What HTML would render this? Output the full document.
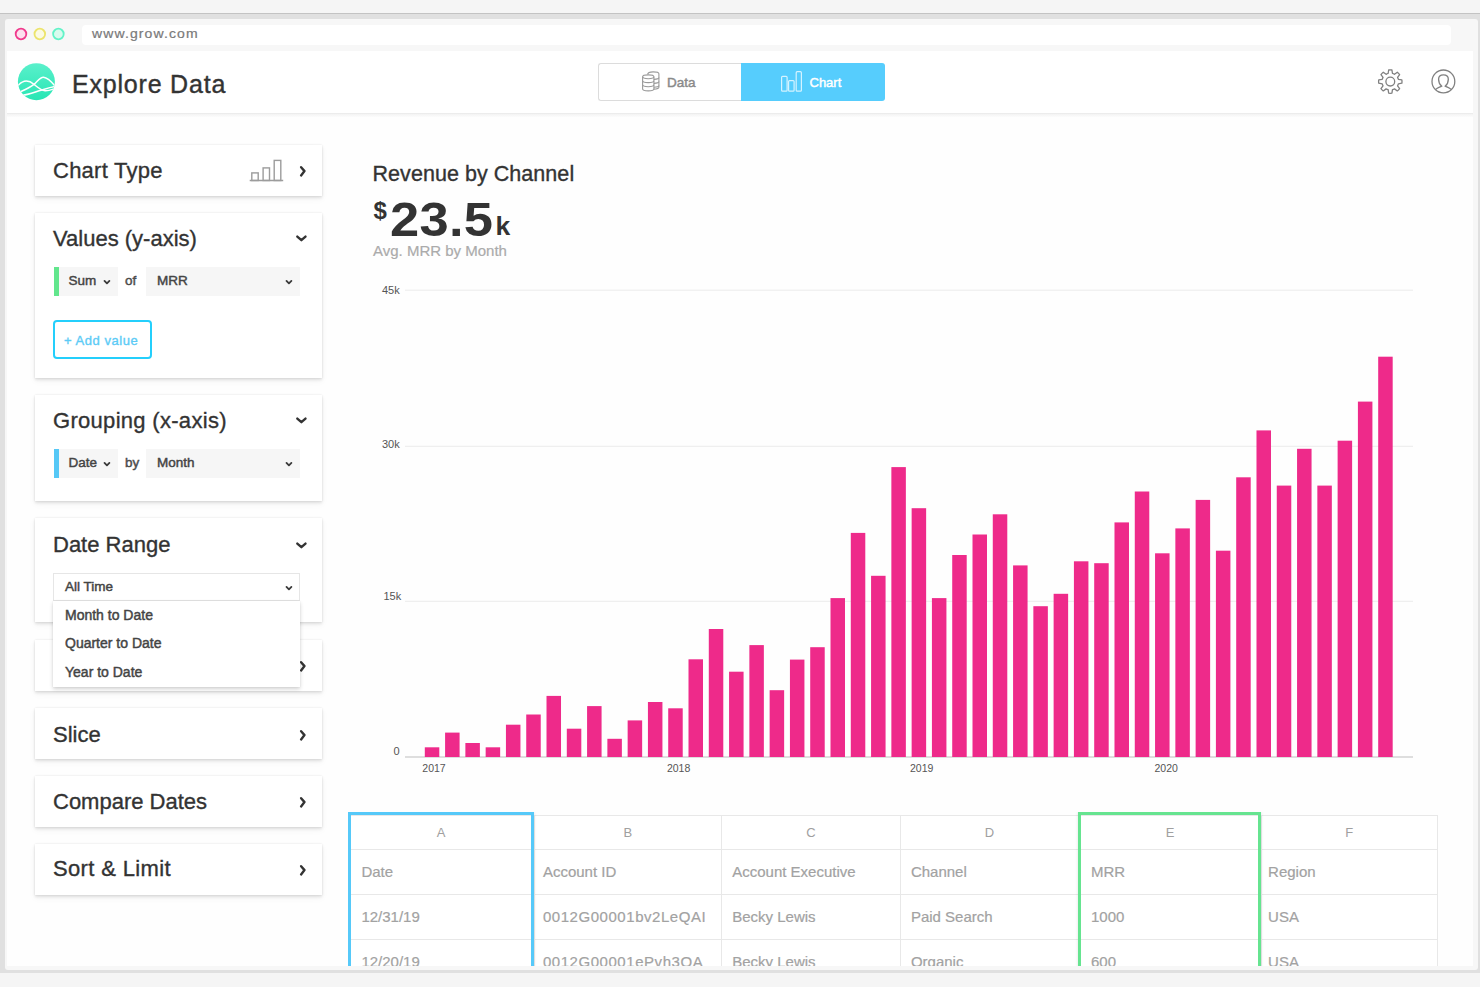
<!DOCTYPE html>
<html><head><meta charset="utf-8">
<style>
*{box-sizing:border-box;margin:0;padding:0}
html,body{width:1480px;height:987px;overflow:hidden;background:#f5f5f5;font-family:"Liberation Sans",sans-serif;position:relative}
.a{position:absolute}
.t{position:absolute;line-height:1;white-space:nowrap}
.frame{left:0;top:13px;width:1480px;height:960px;background:#e0e0e0;border-top:1.8px solid #c3c3c3}
.win{left:5px;top:19px;width:1473px;height:951px;background:#f7f7f7;border-radius:3px}
.content{left:7px;top:51px;width:1466px;height:915px;background:#fefefe;overflow:hidden}
.card{position:absolute;left:35px;width:287px;background:#fff;box-shadow:0 2px 3px rgba(0,0,0,0.10),0 0 2px rgba(0,0,0,0.09),0 3px 8px rgba(0,0,0,0.04)}
.ct{color:#333;font-size:22px;-webkit-text-stroke:0.35px #333}
.sel{position:absolute;background:#f6f6f6;height:28px}
.st{color:#444;font-size:13.5px;font-weight:400;-webkit-text-stroke:0.45px #444}
.tl{color:#a2a2a2;font-size:15px;-webkit-text-stroke:0.2px #a2a2a2}
.cl{color:#a0a0a0;font-size:13px}
.al{color:#555;font-size:11px}
</style></head><body>
<div class="a frame"></div>
<div class="a win"></div>
<!-- traffic lights -->
<svg class="a" style="left:0;top:19px" width="80" height="30">
<circle cx="21" cy="15" r="5.3" fill="#fde0ee" stroke="#f03a8c" stroke-width="1.8"/>
<circle cx="39.8" cy="15" r="5.3" fill="#fbfae4" stroke="#ece46c" stroke-width="1.8"/>
<circle cx="58.4" cy="15" r="5.3" fill="#d8fbee" stroke="#62f3c8" stroke-width="1.8"/>
</svg>
<div class="a" style="left:82px;top:25px;width:1369px;height:20px;background:#fff;border-radius:4px"></div>
<div class="t" style="left:91.5px;top:28px;font-size:12.5px;color:#7a7a7a;letter-spacing:1px;-webkit-text-stroke:0.2px #7a7a7a;transform:scaleX(1.12);transform-origin:0 0">www.grow.com</div>

<div class="a content"></div>
<div class="a" style="left:7px;top:51px;width:1466px;height:62px;background:#fff"></div>
<div class="a" style="left:7px;top:113px;width:1466px;height:1px;background:#ececec"></div>
<div class="a" style="left:7px;top:114px;width:1466px;height:3px;background:linear-gradient(#f3f3f3,#fcfcfc)"></div>
<div class="a" style="left:597.5px;top:63px;width:143.5px;height:38px;border:1.5px solid #dcdcdc;border-right:none;border-radius:3px 0 0 3px;background:#fff"></div>
<div class="a" style="left:740.5px;top:63px;width:144.5px;height:38px;background:#56cdfd;border-radius:0 3px 3px 0"></div>
<svg class="a" style="left:0;top:0" width="1480" height="120">
<defs><linearGradient id="lg" x1="0" y1="0" x2="0" y2="1"><stop offset="0" stop-color="#5af0cb"/><stop offset="1" stop-color="#28e6b4"/></linearGradient>
<clipPath id="lc"><circle cx="36.4" cy="81.7" r="18.5"/></clipPath></defs>
<circle cx="36.4" cy="81.7" r="18.5" fill="url(#lg)"/>
<g clip-path="url(#lc)"><g fill="none" stroke="#fff" stroke-width="1.5" transform="translate(14,60)">
<path d="M2,28 C7,21 13,18.5 20,24.3 C24,27.5 27,30.5 31,30.8 C35,31 38,29.5 41,28.5"/>
<path d="M4,33 C10,30 15,28 20,24.3 C24,21 26,17 29.5,17.2 C33,17.4 37,21 41,26"/>
<path d="M7,35.5 C14,35 21,32 27,30.2 C31,29 35,27.5 41,26.5"/>
</g></g>
<g fill="none" stroke="#9a9a9a" stroke-width="1.1">
<path d="M647.6,74.4 C647.8,72.7 650.3,71.9 653.1,71.9 C656.3,71.9 658.9,72.8 658.9,73.8 L658.9,87.2 C658.9,88.1 656.6,88.9 653.9,89.1"/>
<path d="M653.9,79.4 C656.6,79.3 658.9,78.5 658.9,77.6"/>
<path d="M653.9,83.4 C656.6,83.3 658.9,82.5 658.9,81.6"/>
<path d="M653.9,87.2 C656.6,87.1 658.9,86.3 658.9,85.4"/>
<ellipse cx="648.25" cy="76.8" rx="5.65" ry="1.9"/>
<path d="M642.6,76.8 L642.6,89 C642.6,90.1 645.1,90.9 648.25,90.9 C651.4,90.9 653.9,90.1 653.9,89 L653.9,76.8"/>
<path d="M642.6,80.7 C642.6,81.8 645.1,82.6 648.25,82.6 C651.4,82.6 653.9,81.8 653.9,80.7"/>
<path d="M642.6,84.8 C642.6,85.9 645.1,86.7 648.25,86.7 C651.4,86.7 653.9,85.9 653.9,84.8"/>
</g>
<g fill="none" stroke="#808080" stroke-width="1.3">
<path d="M1388.13,73.49 L1388.67,70.01 A11.70,11.70 0 0 1 1391.93,70.01 L1392.47,73.49 A8.40,8.40 0 0 1 1394.50,74.33 L1397.34,72.26 A11.70,11.70 0 0 1 1399.64,74.56 L1397.57,77.40 A8.40,8.40 0 0 1 1398.41,79.43 L1401.89,79.97 A11.70,11.70 0 0 1 1401.89,83.23 L1398.41,83.77 A8.40,8.40 0 0 1 1397.57,85.80 L1399.64,88.64 A11.70,11.70 0 0 1 1397.34,90.94 L1394.50,88.87 A8.40,8.40 0 0 1 1392.47,89.71 L1391.93,93.19 A11.70,11.70 0 0 1 1388.67,93.19 L1388.13,89.71 A8.40,8.40 0 0 1 1386.10,88.87 L1383.26,90.94 A11.70,11.70 0 0 1 1380.96,88.64 L1383.03,85.80 A8.40,8.40 0 0 1 1382.19,83.77 L1378.71,83.23 A11.70,11.70 0 0 1 1378.71,79.97 L1382.19,79.43 A8.40,8.40 0 0 1 1383.03,77.40 L1380.96,74.56 A11.70,11.70 0 0 1 1383.26,72.26 L1386.10,74.33 A8.40,8.40 0 0 1 1388.13,73.49 Z" stroke-linejoin="round"/>
<circle cx="1390.3" cy="81.6" r="4.4"/>
<circle cx="1443.4" cy="81.4" r="11.4"/>
<path d="M1435.8,89.4 C1437.5,87.6 1440,87.2 1441.6,86.1 C1439.3,84.2 1438.6,81.5 1438.6,79.2 C1438.6,76.4 1440.7,74.8 1443.4,74.8 C1446.1,74.8 1448.3,76.4 1448.3,79.2 C1448.3,81.5 1447.6,84.2 1445.3,86.1 C1446.9,87.2 1449.4,87.6 1451,89.4"/>
</g>
</svg>
<div class="t" style="left:72px;top:72.3px;font-size:25px;color:#333;letter-spacing:0.8px;-webkit-text-stroke:0.4px #333">Explore Data</div>
<div class="t" style="left:667px;top:75.8px;font-size:13.5px;color:#8a8a8a;-webkit-text-stroke:0.45px #8a8a8a">Data</div>
<div class="t" style="left:809.5px;top:75.9px;font-size:13px;color:#fff;-webkit-text-stroke:0.45px #fff">Chart</div>
<svg class="a" style="left:770px;top:65px" width="40" height="32"><g fill="none" stroke="rgba(255,255,255,0.75)" stroke-width="1.2">
<rect x="11.6" y="11.3" width="5.5" height="14.9" rx="1"/><rect x="18.6" y="15.6" width="5.5" height="10.6" rx="1"/><rect x="26.2" y="6.7" width="5.2" height="19.5" rx="1"/></g></svg>
<!--HEADER-->
<div class="card" style="top:145px;height:51px"></div>
<div class="t ct" style="left:53px;top:160.4px;letter-spacing:0.25px">Chart Type</div>
<svg class="a" style="left:248px;top:157px" width="38" height="26"><g fill="none" stroke="#9c9c9c" stroke-width="1.4"><path d="M1.7,23.5 H35.2"/><rect x="3.8" y="15.9" width="6.4" height="7.6"/><rect x="15.1" y="10.9" width="6.4" height="12.6"/><rect x="26.2" y="3.4" width="6.6" height="20.1"/></g></svg>
<svg class="a" style="left:296px;top:164px" width="14" height="15"><path d="M5.1,3.2 L8.5,7.1 L5.1,11.4" fill="none" stroke="#333" stroke-width="2.4" stroke-linecap="round" stroke-linejoin="round"/></svg>
<div class="card" style="top:213px;height:165px"></div>
<div class="t ct" style="left:53px;top:228.4px;letter-spacing:0px">Values (y-axis)</div>
<svg class="a" style="left:293px;top:232.3px" width="16" height="13"><path d="M4.3,4.6 L8.4,8.2 L12.5,4.6" fill="none" stroke="#333" stroke-width="2.4" stroke-linecap="round" stroke-linejoin="round"/></svg>
<div class="a" style="left:53.5px;top:267px;width:5px;height:28.5px;background:#62e68d"></div>
<div class="sel" style="left:58.5px;top:267px;width:59px;height:28.5px"></div>
<div class="sel" style="left:145.7px;top:267px;width:154.3px;height:28.5px"></div>
<div class="t st" style="left:68.5px;top:274.1px">Sum</div>
<svg class="a" style="left:103px;top:278.2px" width="10" height="8"><path d="M1.5,2.9 L3.95,5.4 L6.4,2.9" fill="none" stroke="#3a3a3a" stroke-width="1.8" stroke-linecap="round" stroke-linejoin="round"/></svg>
<div class="t st" style="left:125px;top:274.1px;font-weight:400;color:#555">of</div>
<div class="t st" style="left:157px;top:274.1px">MRR</div>
<svg class="a" style="left:284.8px;top:278.2px" width="10" height="8"><path d="M1.5,2.9 L3.95,5.4 L6.4,2.9" fill="none" stroke="#3a3a3a" stroke-width="1.8" stroke-linecap="round" stroke-linejoin="round"/></svg>
<div class="a" style="left:52.9px;top:320.2px;width:98.8px;height:38.4px;border:2px solid #24cffc;border-radius:4px"></div>
<div class="t" style="left:64px;top:333.5px;font-size:13px;color:#5ccbf6;letter-spacing:0.55px;-webkit-text-stroke:0.35px #5ccbf6">+ Add value</div>
<div class="card" style="top:395px;height:106px"></div>
<div class="t ct" style="left:53px;top:410.4px;letter-spacing:0.3px">Grouping (x-axis)</div>
<svg class="a" style="left:293px;top:414.3px" width="16" height="13"><path d="M4.3,4.6 L8.4,8.2 L12.5,4.6" fill="none" stroke="#333" stroke-width="2.4" stroke-linecap="round" stroke-linejoin="round"/></svg>
<div class="a" style="left:53.5px;top:449px;width:5px;height:28.5px;background:#56c8f6"></div>
<div class="sel" style="left:58.5px;top:449px;width:59px;height:28.5px"></div>
<div class="sel" style="left:145.7px;top:449px;width:154.3px;height:28.5px"></div>
<div class="t st" style="left:68.5px;top:456.1px">Date</div>
<svg class="a" style="left:103px;top:460.2px" width="10" height="8"><path d="M1.5,2.9 L3.95,5.4 L6.4,2.9" fill="none" stroke="#3a3a3a" stroke-width="1.8" stroke-linecap="round" stroke-linejoin="round"/></svg>
<div class="t st" style="left:125px;top:456.1px;font-weight:400;color:#555">by</div>
<div class="t st" style="left:157px;top:456.1px">Month</div>
<svg class="a" style="left:284.8px;top:460.2px" width="10" height="8"><path d="M1.5,2.9 L3.95,5.4 L6.4,2.9" fill="none" stroke="#3a3a3a" stroke-width="1.8" stroke-linecap="round" stroke-linejoin="round"/></svg>
<div class="card" style="top:518px;height:104px"></div>
<div class="t ct" style="left:53px;top:534.2px;letter-spacing:0px">Date Range</div>
<svg class="a" style="left:293px;top:539px" width="16" height="13"><path d="M4.3,4.6 L8.4,8.2 L12.5,4.6" fill="none" stroke="#333" stroke-width="2.4" stroke-linecap="round" stroke-linejoin="round"/></svg>
<div class="card" style="top:640px;height:51px"></div>
<svg class="a" style="left:296px;top:659.3px" width="14" height="15"><path d="M5.1,3.2 L8.5,7.1 L5.1,11.4" fill="none" stroke="#333" stroke-width="2.4" stroke-linecap="round" stroke-linejoin="round"/></svg>
<div class="card" style="top:708px;height:51px"></div>
<div class="t ct" style="left:53px;top:723.7px;letter-spacing:0px">Slice</div>
<svg class="a" style="left:296px;top:727.5px" width="14" height="15"><path d="M5.1,3.2 L8.5,7.1 L5.1,11.4" fill="none" stroke="#333" stroke-width="2.4" stroke-linecap="round" stroke-linejoin="round"/></svg>
<div class="card" style="top:776px;height:51px"></div>
<div class="t ct" style="left:53px;top:791.1px;letter-spacing:0px">Compare Dates</div>
<svg class="a" style="left:296px;top:795px" width="14" height="15"><path d="M5.1,3.2 L8.5,7.1 L5.1,11.4" fill="none" stroke="#333" stroke-width="2.4" stroke-linecap="round" stroke-linejoin="round"/></svg>
<div class="card" style="top:844px;height:51px"></div>
<div class="t ct" style="left:53px;top:858.2px;letter-spacing:0.35px">Sort &amp; Limit</div>
<svg class="a" style="left:296px;top:862.5px" width="14" height="15"><path d="M5.1,3.2 L8.5,7.1 L5.1,11.4" fill="none" stroke="#333" stroke-width="2.4" stroke-linecap="round" stroke-linejoin="round"/></svg>
<div class="a" style="left:53.4px;top:572.8px;width:247.1px;height:28.4px;border:1px solid #e6e6e6;background:#fff"></div>
<div class="t st" style="left:65px;top:580.2px;font-size:13.5px">All Time</div>
<svg class="a" style="left:284.8px;top:584px" width="10" height="8"><path d="M1.5,2.9 L3.95,5.4 L6.4,2.9" fill="none" stroke="#3a3a3a" stroke-width="1.8" stroke-linecap="round" stroke-linejoin="round"/></svg>
<div class="a" style="left:53.4px;top:601.2px;width:247.1px;height:86.1px;background:#fff;box-shadow:0 2px 4px rgba(0,0,0,0.18),0 0 1px rgba(0,0,0,0.1)"></div>
<div class="t st" style="left:65px;top:607.9px;font-size:14px;color:#444">Month to Date</div>
<div class="t st" style="left:65px;top:636.4px;font-size:14px;color:#444">Quarter to Date</div>
<div class="t st" style="left:65px;top:665.0px;font-size:14px;color:#444">Year to Date</div>
<!--CARDS-->

<div class="t" style="left:372.5px;top:163.9px;font-size:21.5px;color:#333;letter-spacing:0.05px;-webkit-text-stroke:0.35px #333">Revenue by Channel</div>
<div class="t" style="left:373.5px;top:198.7px;font-size:24px;font-weight:700;color:#333">$</div>
<div class="t" style="left:389.5px;top:194.8px;font-size:49px;font-weight:700;color:#333;letter-spacing:0.3px;transform:scaleX(1.07);transform-origin:0 0">23.5</div>
<div class="t" style="left:495.5px;top:213.3px;font-size:26.5px;font-weight:700;color:#333">k</div>
<div class="t" style="left:373px;top:243.0px;font-size:15px;color:#ababab;-webkit-text-stroke:0.2px #ababab">Avg. MRR by Month</div>
<svg class="a" style="left:0;top:0" width="1480" height="800">
<rect x="405" y="289.7" width="1008" height="1" fill="#ececec"/>
<rect x="405" y="445.8" width="1008" height="1" fill="#ececec"/>
<rect x="405" y="600.8" width="1008" height="1" fill="#ececec"/>
<rect x="405" y="756.4" width="1008" height="1.2" fill="#c8c8c8"/>
<rect x="424.80" y="747.3" width="14.5" height="9.7" fill="#ee2a8a"/>
<rect x="445.09" y="732.6" width="14.5" height="24.4" fill="#ee2a8a"/>
<rect x="465.37" y="743.0" width="14.5" height="14.0" fill="#ee2a8a"/>
<rect x="485.66" y="747.3" width="14.5" height="9.7" fill="#ee2a8a"/>
<rect x="505.94" y="724.7" width="14.5" height="32.3" fill="#ee2a8a"/>
<rect x="526.23" y="714.5" width="14.5" height="42.5" fill="#ee2a8a"/>
<rect x="546.51" y="695.9" width="14.5" height="61.1" fill="#ee2a8a"/>
<rect x="566.80" y="728.7" width="14.5" height="28.3" fill="#ee2a8a"/>
<rect x="587.08" y="706.1" width="14.5" height="50.9" fill="#ee2a8a"/>
<rect x="607.37" y="738.8" width="14.5" height="18.2" fill="#ee2a8a"/>
<rect x="627.65" y="720.4" width="14.5" height="36.6" fill="#ee2a8a"/>
<rect x="647.93" y="702.0" width="14.5" height="55.0" fill="#ee2a8a"/>
<rect x="668.22" y="708.3" width="14.5" height="48.7" fill="#ee2a8a"/>
<rect x="688.50" y="659.3" width="14.5" height="97.7" fill="#ee2a8a"/>
<rect x="708.79" y="629.0" width="14.5" height="128.0" fill="#ee2a8a"/>
<rect x="729.08" y="671.7" width="14.5" height="85.3" fill="#ee2a8a"/>
<rect x="749.36" y="645.1" width="14.5" height="111.9" fill="#ee2a8a"/>
<rect x="769.64" y="690.2" width="14.5" height="66.8" fill="#ee2a8a"/>
<rect x="789.93" y="659.6" width="14.5" height="97.4" fill="#ee2a8a"/>
<rect x="810.22" y="647.2" width="14.5" height="109.8" fill="#ee2a8a"/>
<rect x="830.50" y="598.1" width="14.5" height="158.9" fill="#ee2a8a"/>
<rect x="850.79" y="532.9" width="14.5" height="224.1" fill="#ee2a8a"/>
<rect x="871.07" y="575.8" width="14.5" height="181.2" fill="#ee2a8a"/>
<rect x="891.36" y="467.1" width="14.5" height="289.9" fill="#ee2a8a"/>
<rect x="911.64" y="508.2" width="14.5" height="248.8" fill="#ee2a8a"/>
<rect x="931.92" y="598.1" width="14.5" height="158.9" fill="#ee2a8a"/>
<rect x="952.21" y="555.0" width="14.5" height="202.0" fill="#ee2a8a"/>
<rect x="972.50" y="534.5" width="14.5" height="222.5" fill="#ee2a8a"/>
<rect x="992.78" y="514.3" width="14.5" height="242.7" fill="#ee2a8a"/>
<rect x="1013.07" y="565.4" width="14.5" height="191.6" fill="#ee2a8a"/>
<rect x="1033.35" y="606.2" width="14.5" height="150.8" fill="#ee2a8a"/>
<rect x="1053.63" y="593.8" width="14.5" height="163.2" fill="#ee2a8a"/>
<rect x="1073.92" y="561.3" width="14.5" height="195.7" fill="#ee2a8a"/>
<rect x="1094.20" y="563.2" width="14.5" height="193.8" fill="#ee2a8a"/>
<rect x="1114.49" y="522.4" width="14.5" height="234.6" fill="#ee2a8a"/>
<rect x="1134.78" y="491.5" width="14.5" height="265.5" fill="#ee2a8a"/>
<rect x="1155.06" y="553.3" width="14.5" height="203.7" fill="#ee2a8a"/>
<rect x="1175.35" y="528.4" width="14.5" height="228.6" fill="#ee2a8a"/>
<rect x="1195.63" y="499.9" width="14.5" height="257.1" fill="#ee2a8a"/>
<rect x="1215.91" y="550.7" width="14.5" height="206.3" fill="#ee2a8a"/>
<rect x="1236.20" y="477.3" width="14.5" height="279.7" fill="#ee2a8a"/>
<rect x="1256.49" y="430.4" width="14.5" height="326.6" fill="#ee2a8a"/>
<rect x="1276.77" y="485.6" width="14.5" height="271.4" fill="#ee2a8a"/>
<rect x="1297.06" y="448.8" width="14.5" height="308.2" fill="#ee2a8a"/>
<rect x="1317.34" y="485.6" width="14.5" height="271.4" fill="#ee2a8a"/>
<rect x="1337.62" y="440.7" width="14.5" height="316.3" fill="#ee2a8a"/>
<rect x="1357.91" y="401.6" width="14.5" height="355.4" fill="#ee2a8a"/>
<rect x="1378.19" y="356.7" width="14.5" height="400.3" fill="#ee2a8a"/>
</svg>
<div class="t al" style="left:382px;top:284.6px">45k</div>
<div class="t al" style="left:382px;top:438.6px">30k</div>
<div class="t al" style="left:383.5px;top:590.8px">15k</div>
<div class="t al" style="left:393.5px;top:746.2px">0</div>
<div class="t al" style="left:422.3px;top:763.2px;font-size:10.5px">2017</div>
<div class="t al" style="left:666.9px;top:763.2px;font-size:10.5px">2018</div>
<div class="t al" style="left:910.0px;top:763.2px;font-size:10.5px">2019</div>
<div class="t al" style="left:1154.5px;top:763.2px;font-size:10.5px">2020</div>
<!--CHART-->
<div class="a" style="left:348px;top:812px;width:1090px;height:154px;overflow:hidden">
<div class="a" style="left:0;top:3.5px;width:1089px;height:200px;background:#fff"></div>
<div class="a" style="left:0;top:3.0px;width:1089px;height:1px;background:#e8e8e8"></div>
<div class="a" style="left:0;top:36.5px;width:1089px;height:1px;background:#e8e8e8"></div>
<div class="a" style="left:0;top:81.8px;width:1089px;height:1px;background:#e8e8e8"></div>
<div class="a" style="left:0;top:127.0px;width:1089px;height:1px;background:#e8e8e8"></div>
<div class="a" style="left:185.5px;top:3.0px;width:1px;height:200px;background:#e8e8e8"></div>
<div class="a" style="left:373.0px;top:3.0px;width:1px;height:200px;background:#e8e8e8"></div>
<div class="a" style="left:552.1px;top:3.0px;width:1px;height:200px;background:#e8e8e8"></div>
<div class="a" style="left:730.0px;top:3.0px;width:1px;height:200px;background:#e8e8e8"></div>
<div class="a" style="left:913.0px;top:3.0px;width:1px;height:200px;background:#e8e8e8"></div>
<div class="a" style="left:1088.5px;top:3.0px;width:1px;height:200px;background:#e8e8e8"></div>
<div class="t cl" style="left:73.0px;width:40px;text-align:center;top:13.5px">A</div>
<div class="t tl" style="left:13.4px;top:52.3px">Date</div>
<div class="t tl" style="left:13.4px;top:96.8px">12/31/19</div>
<div class="t tl" style="left:13.4px;top:141.8px">12/20/19</div>
<div class="t cl" style="left:259.8px;width:40px;text-align:center;top:13.5px">B</div>
<div class="t tl" style="left:194.9px;top:52.3px">Account ID</div>
<div class="t tl" style="left:194.9px;top:96.8px;letter-spacing:0.55px">0012G00001bv2LeQAI</div>
<div class="t tl" style="left:194.9px;top:141.8px;letter-spacing:0.55px">0012G00001ePvh3QA</div>
<div class="t cl" style="left:443.0px;width:40px;text-align:center;top:13.5px">C</div>
<div class="t tl" style="left:384.2px;top:52.3px">Account Executive</div>
<div class="t tl" style="left:384.2px;top:96.8px">Becky Lewis</div>
<div class="t tl" style="left:384.2px;top:141.8px">Becky Lewis</div>
<div class="t cl" style="left:621.5px;width:40px;text-align:center;top:13.5px">D</div>
<div class="t tl" style="left:562.9px;top:52.3px">Channel</div>
<div class="t tl" style="left:562.9px;top:96.8px">Paid Search</div>
<div class="t tl" style="left:562.9px;top:141.8px">Organic</div>
<div class="t cl" style="left:802.0px;width:40px;text-align:center;top:13.5px">E</div>
<div class="t tl" style="left:743.0px;top:52.3px">MRR</div>
<div class="t tl" style="left:743.0px;top:96.8px">1000</div>
<div class="t tl" style="left:743.0px;top:141.8px">600</div>
<div class="t cl" style="left:981.2px;width:40px;text-align:center;top:13.5px">F</div>
<div class="t tl" style="left:920.1px;top:52.3px">Region</div>
<div class="t tl" style="left:920.1px;top:96.8px">USA</div>
<div class="t tl" style="left:920.1px;top:141.8px">USA</div>
<div class="a" style="left:0;top:0;width:186.2px;height:200px;border:3px solid #56c9f9;box-shadow:0 0 3px rgba(0,0,0,0.12)"></div>
<div class="a" style="left:730.4px;top:0;width:183.1px;height:200px;border:3px solid #66e490;box-shadow:0 0 3px rgba(0,0,0,0.12)"></div>
</div>
<!--TABLE-->

</body></html>
